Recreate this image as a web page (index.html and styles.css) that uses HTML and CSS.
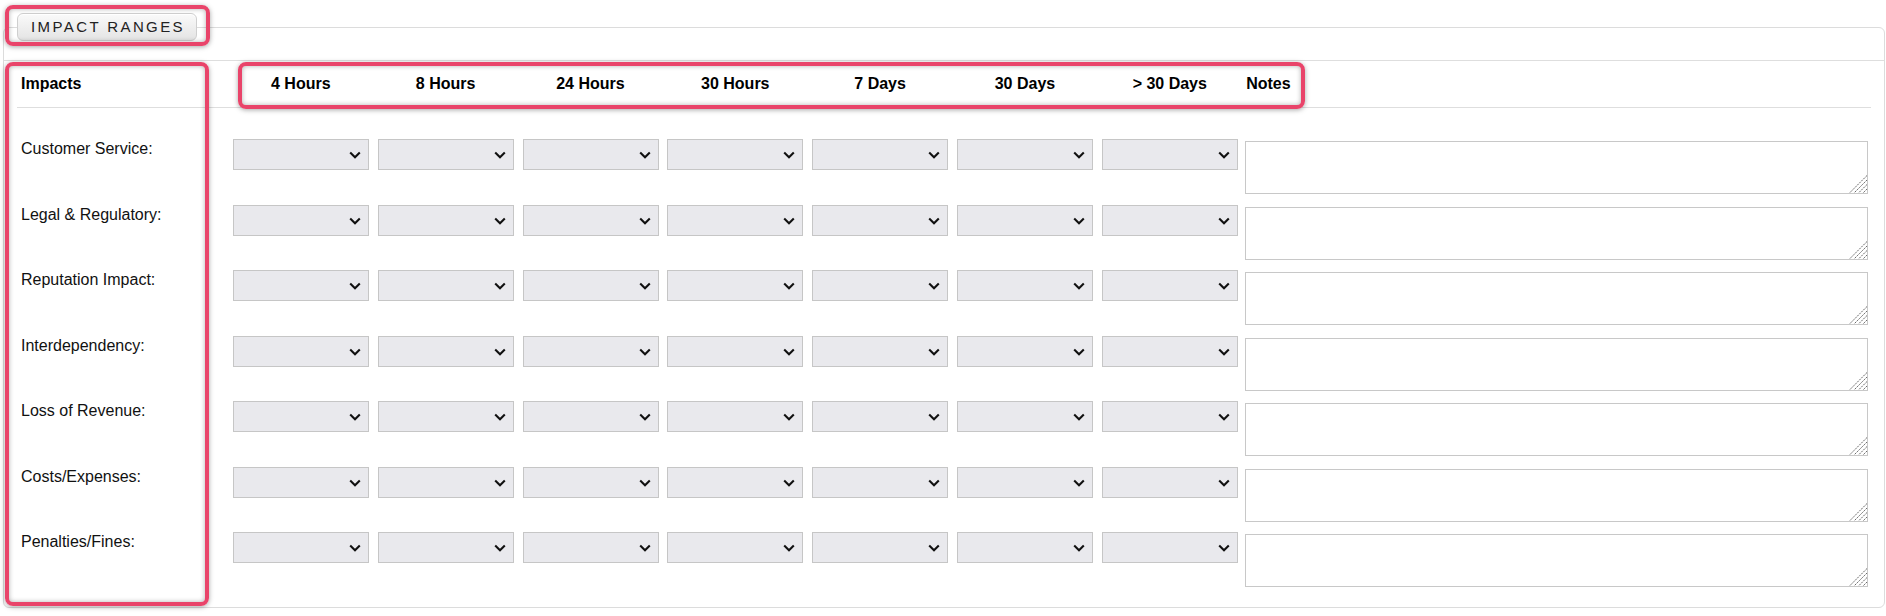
FILE: index.html
```html
<!DOCTYPE html>
<html lang="en">
<head>
<meta charset="utf-8">
<title>Impact Ranges</title>
<link rel="stylesheet" href="styles.css">
</head>
<body>
<div class="page">
  <fieldset class="panel">
    <legend class="panel-title">Impact Ranges</legend>
    <div class="topline"></div>
    <div class="grid head">
      <div class="h h-label">Impacts</div>
      <div class="h">4 Hours</div>
      <div class="h">8 Hours</div>
      <div class="h">24 Hours</div>
      <div class="h">30 Hours</div>
      <div class="h">7 Days</div>
      <div class="h">30 Days</div>
      <div class="h">&gt; 30 Days</div>
      <div class="h h-notes">Notes</div>
    </div>
    <div class="rows" id="rows"></div>
  </fieldset>

  <div class="mark mark-legend"></div>
  <div class="mark mark-labels"></div>
  <div class="mark mark-head"></div>
</div>
<script src="app.js"></script>
</body>
</html>
```

FILE: app.js
```js
(function () {
  var labels = [
    "Customer Service:",
    "Legal & Regulatory:",
    "Reputation Impact:",
    "Interdependency:",
    "Loss of Revenue:",
    "Costs/Expenses:",
    "Penalties/Fines:"
  ];
  var chevron = '<svg class="chev" width="12" height="8" viewBox="0 0 12 8"><path d="M1.2 1.5 L6 6.2 L10.8 1.5" fill="none" stroke="#111" stroke-width="2.1"/></svg>';
  var grip = '<svg class="grip" width="18" height="18" viewBox="0 0 18 18">' +
    '<path d="M18 0.5 L0.5 18 M18 5 L5 18 M18 9.5 L9.5 18 M18 14 L14 18" fill="none" stroke="#6a6a6a" stroke-width="1" stroke-dasharray="2 1"/></svg>';
  var rows = document.getElementById("rows");
  var html = "";
  labels.forEach(function () {
    html += '<div class="grid row"><div class="label"></div>';
    for (var i = 0; i < 7; i++) {
      html += '<div class="cell"><div class="select">' + chevron + '</div></div>';
    }
    html += '<div class="cell cell-notes"><textarea class="notes"></textarea>' + grip + '</div></div>';
  });
  rows.innerHTML = html;
  var ls = rows.querySelectorAll(".label");
  for (var j = 0; j < ls.length; j++) ls[j].textContent = labels[j];
})();
```

FILE: styles.css
```css
html, body {
  margin: 0;
  padding: 0;
  background: #ffffff;
}

body {
  font-family: "Liberation Sans", Arial, sans-serif;
  color: #111;
}

.page {
  position: relative;
  display: flow-root;
  width: 1886px;
  height: 616px;
  overflow: hidden;
}

.panel {
  margin: 13px 1px 0 3px;
  padding: 0 13px 9.5px;
  border: 1px solid #dcdcdc;
  border-radius: 6px;
  min-width: 0;
}

.panel-title {
  margin: 0;
  padding: 0 11px 0 13px;
  height: 26px;
  line-height: 26px;
  border: 1px solid #cfcfcf;
  border-radius: 6px;
  background: linear-gradient(#fafafa, #e4e4e4);
  font-size: 15px;
  letter-spacing: 2.4px;
  text-transform: uppercase;
  color: #222;
  box-shadow: inset 0 1px 0 #ffffff;
}

.topline {
  margin: 19px -13px 0;
  border-top: 1px solid #dedede;
}

.grid {
  display: grid;
  grid-template-columns: 211.4px repeat(7, 144.83px) 1fr;
}

.head {
  height: 46px;
  align-items: center;
  border-bottom: 1px solid #dedede;
}

.h {
  font-size: 16px;
  font-weight: bold;
  color: #000;
  text-align: center;
}

.h-label,
.h-notes {
  text-align: left;
  padding-left: 4px;
}

.rows {
  padding-top: 31px;
}

.row {
  height: 65.5px;
  align-items: start;
}

.label {
  padding: 1px 0 0 4px;
  font-size: 16px;
  color: #111;
}

.cell {
  padding: 0 4.3px 0 4.6px;
}

.select {
  box-sizing: border-box;
  height: 31px;
  width: 100%;
  border: 1px solid #c6c6c6;
  background: #e9e9ed;
  display: flex;
  align-items: center;
  justify-content: flex-end;
  padding-right: 7px;
}

.chev {
  display: block;
  margin-top: 1px;
}

.cell-notes {
  position: relative;
  padding: 0 3px 0 2.8px;
}

.notes {
  display: block;
  box-sizing: border-box;
  width: 100%;
  height: 53px;
  margin: 2px 0 0;
  border: 1px solid #c8c8c8;
  background: #fff;
  resize: none;
  font-family: "Liberation Sans", Arial, sans-serif;
}

.grip {
  position: absolute;
  right: 4px;
  bottom: 1px;
  display: block;
}

.mark {
  position: absolute;
  box-sizing: border-box;
  border: 4px solid #e9446a;
  border-radius: 8px;
  box-shadow: 0 1px 5px rgba(0, 0, 0, 0.35), inset 0 0 5px rgba(0, 0, 0, 0.3);
  pointer-events: none;
}

.mark-legend {
  left: 5px;
  top: 5px;
  width: 205px;
  height: 41px;
}

.mark-labels {
  left: 5px;
  top: 62px;
  width: 204px;
  height: 544px;
}

.mark-head {
  left: 238px;
  top: 62px;
  width: 1067px;
  height: 47px;
}
```
